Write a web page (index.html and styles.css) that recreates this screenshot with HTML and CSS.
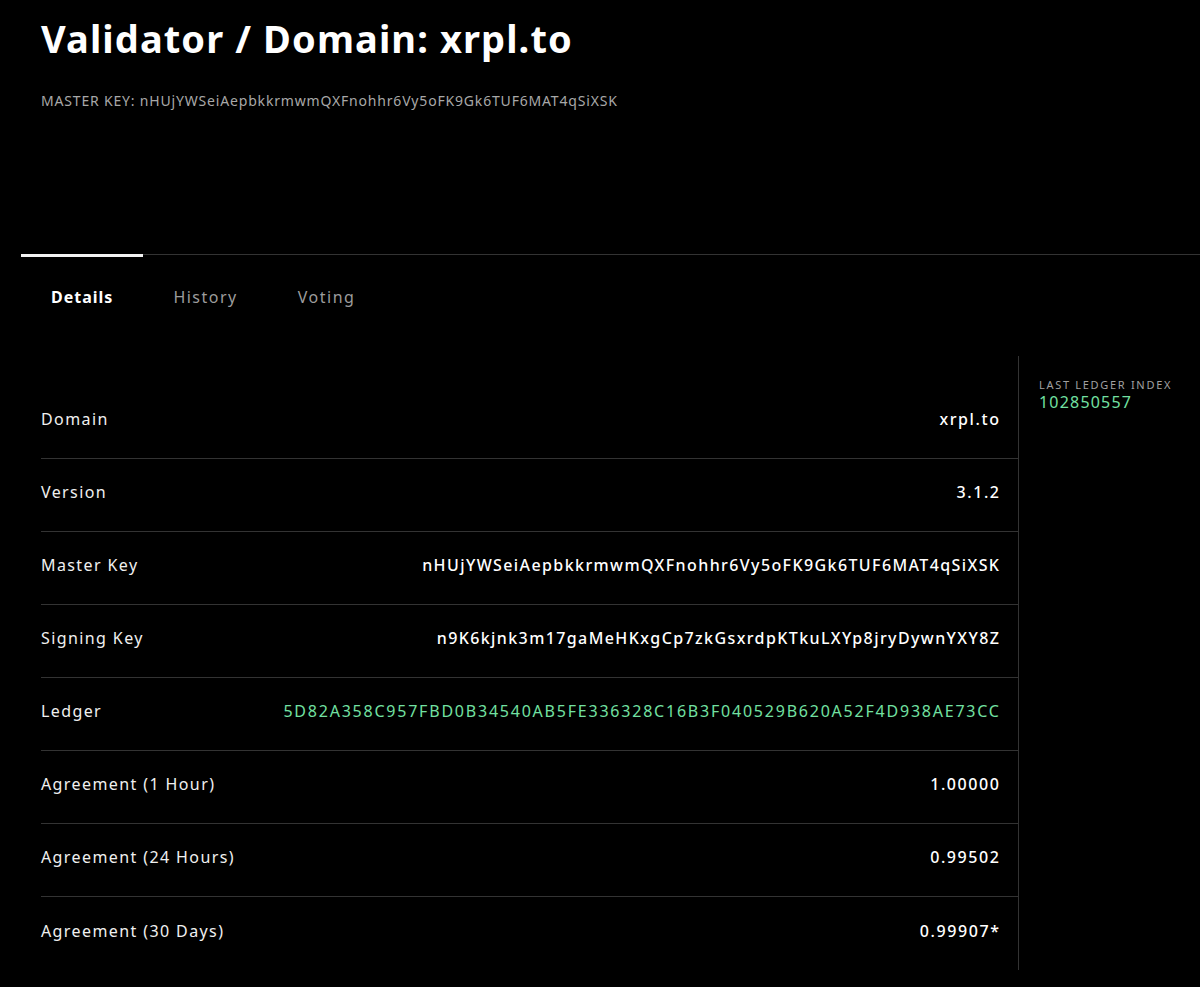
FILE: index.html
```html
<!DOCTYPE html>
<html lang="en">
<head>
<meta charset="utf-8">
<title>Validator / Domain: xrpl.to</title>
<link rel="stylesheet" href="styles.css">
</head>
<body>
<header class="header">
  <h1 class="title">Validator / Domain: xrpl.to</h1>
  <div class="subtitle">MASTER KEY: nHUjYWSeiAepbkkrmwmQXFnohhr6Vy5oFK9Gk6TUF6MAT4qSiXSK</div>
</header>
<nav class="tabs">
  <div class="tab active">Details</div>
  <div class="tab">History</div>
  <div class="tab">Voting</div>
</nav>
<main class="content">
  <section class="table">
    <div class="row"><span class="label">Domain</span><span class="value">xrpl.to</span></div>
    <div class="row"><span class="label">Version</span><span class="value">3.1.2</span></div>
    <div class="row"><span class="label">Master Key</span><span class="value key">nHUjYWSeiAepbkkrmwmQXFnohhr6Vy5oFK9Gk6TUF6MAT4qSiXSK</span></div>
    <div class="row"><span class="label">Signing Key</span><span class="value key">n9K6kjnk3m17gaMeHKxgCp7zkGsxrdpKTkuLXYp8jryDywnYXY8Z</span></div>
    <div class="row"><span class="label">Ledger</span><span class="value hash green">5D82A358C957FBD0B34540AB5FE336328C16B3F040529B620A52F4D938AE73CC</span></div>
    <div class="row"><span class="label">Agreement (1 Hour)</span><span class="value">1.00000</span></div>
    <div class="row"><span class="label">Agreement (24 Hours)</span><span class="value">0.99502</span></div>
    <div class="row"><span class="label">Agreement (30 Days)</span><span class="value">0.99907*</span></div>
  </section>
  <aside class="side">
    <div class="side-label">LAST LEDGER INDEX</div>
    <div class="side-value">102850557</div>
  </aside>
</main>
</body>
</html>
```

FILE: styles.css
```css
html, body {
  margin: 0;
  padding: 0;
  background: #000;
  color: #f4f4f4;
  font-family: "Noto Sans", "Open Sans", sans-serif;
}
.header {
  padding: 14px 41px 0 41px;
  height: 240px;
  box-sizing: border-box;
}
.title {
  margin: 0;
  font-size: 38px;
  line-height: 48px;
  font-weight: 700;
  color: #fff;
  letter-spacing: 1.1px;
}
.subtitle {
  margin-top: 30px;
  font-size: 14px;
  line-height: 18px;
  color: #a8a8a8;
  letter-spacing: 0.82px;
}
.tabs {
  display: flex;
  margin: 14px 0 0 21px;
  border-top: 1px solid #333;
}
.tab {
  padding: 28px 30px 0 30px;
  margin-top: -1px;
  border-top: 3px solid transparent;
  font-size: 16px;
  line-height: 24px;
  color: #9c9c9c;
  letter-spacing: 1.5px;
}
.tab.active {
  border-top-color: #f2f2f2;
  color: #fff;
  font-weight: 700;
  letter-spacing: 1px;
}
.content {
  display: flex;
  margin: 47px 0 0 41px;
}
.table {
  width: 978px;
  padding-top: 30px;
  border-right: 1px solid #333;
  box-sizing: border-box;
}
.row {
  display: flex;
  justify-content: space-between;
  align-items: center;
  height: 73px;
  padding-right: 19px;
  padding-bottom: 6px;
  border-bottom: 1px solid #333;
  box-sizing: border-box;
}
.row:last-child {
  border-bottom: none;
}
.label {
  font-size: 16px;
  letter-spacing: 1.4px;
  color: #f0f0f0;
}
.value {
  font-size: 16px;
  font-weight: 500;
  letter-spacing: 1.6px;
  margin-right: -1.6px;
  color: #fff;
}
.value.key {
  letter-spacing: 1.4px;
  margin-right: -1.4px;
}
.value.hash {
  letter-spacing: 1.78px;
  margin-right: -1.78px;
}
.value.green {
  color: #72e0a2;
  font-weight: 400;
}
.side {
  padding: 22px 0 0 20px;
}
.side-label {
  font-size: 11px;
  line-height: 14px;
  letter-spacing: 1.7px;
  color: #a0a0a0;
}
.side-value {
  font-size: 16px;
  line-height: 20px;
  color: #72e0a2;
  letter-spacing: 1.2px;
}
```
